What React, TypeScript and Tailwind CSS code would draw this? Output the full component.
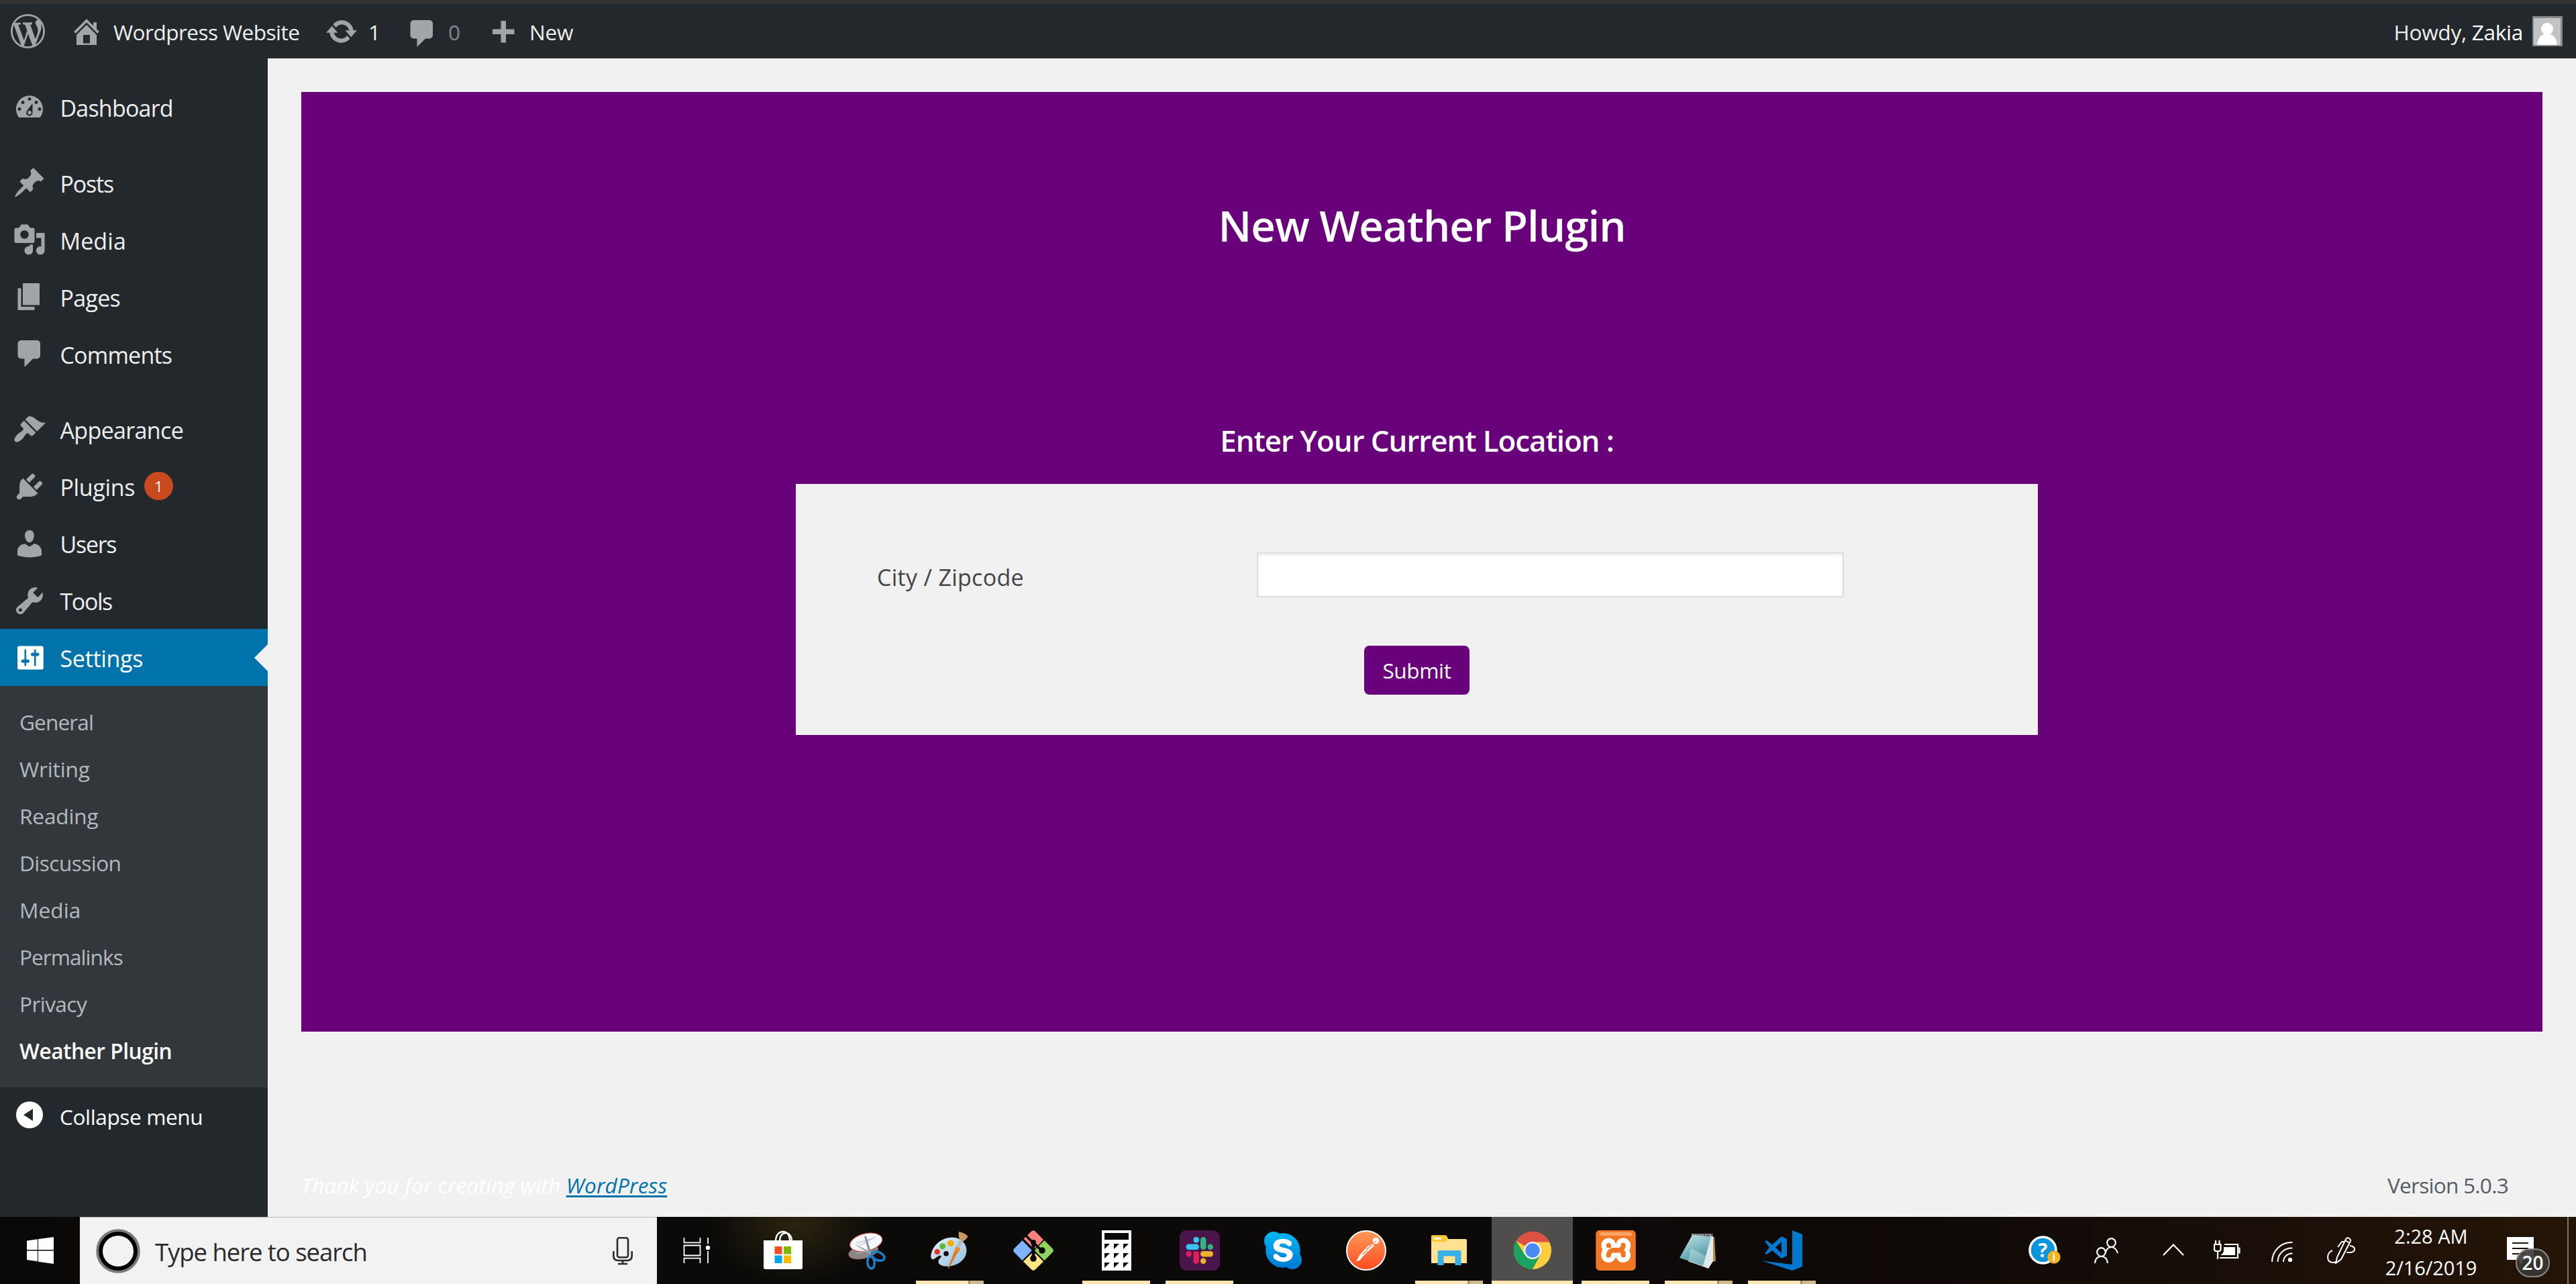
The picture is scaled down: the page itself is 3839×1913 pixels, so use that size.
import React from "react";
import { FaSkype } from "react-icons/fa";
import { SiXampp } from "react-icons/si";

const DASH = {
  wordpress:
    "M20 10c0-5.51-4.49-10-10-10C4.48 0 0 4.49 0 10c0 5.52 4.48 10 10 10 5.51 0 10-4.48 10-10zM7.78 15.37L4.37 6.22c.55-.02 1.17-.08 1.17-.08.5-.06.44-1.13-.06-1.11 0 0-1.45.11-2.37.11-.18 0-.37 0-.58-.01C4.12 2.69 6.87 1.11 10 1.11c2.33 0 4.45.87 6.05 2.34-.68-.11-1.65.39-1.65 1.58 0 .74.45 1.36.9 2.1.35.61.55 1.36.55 2.46 0 1.49-1.4 5-1.4 5l-3.03-8.37c.54-.02.82-.17.82-.17.5-.05.44-1.25-.06-1.22 0 0-1.44.12-2.38.12-.87 0-2.33-.12-2.33-.12-.5-.03-.56 1.2-.06 1.22l.92.08 1.26 3.41zM17.41 10c.24-.64.74-1.87.43-4.25.7 1.29 1.05 2.71 1.05 4.25 0 3.29-1.73 6.24-4.4 7.78.97-2.59 1.94-5.2 2.92-7.78zM6.1 18.09C3.12 16.65 1.11 13.53 1.11 10c0-1.3.23-2.48.72-3.59C3.25 10.3 4.67 14.2 6.1 18.09zm4.03-6.63l2.58 6.98c-.86.29-1.76.45-2.71.45-.79 0-1.57-.11-2.29-.33.81-2.38 1.62-4.74 2.42-7.1z",
  home: "M16 8.5l1.53 1.53-1.06 1.06L10 4.6l-6.47 6.49-1.06-1.06L10 2.5l4 4v-2h2v4zm-6-2.46l6 5.99V18H4v-5.97zM12 17v-5H8v5h4z",
  update:
    "M10.2 3.28c3.53 0 6.43 2.61 6.92 6h2.08l-3.5 4-3.5-4h2.32c-.45-1.97-2.21-3.45-4.32-3.45-1.45 0-2.73.71-3.54 1.78L4.95 5.66C6.23 4.2 8.11 3.28 10.2 3.28zm-.4 13.44c-3.52 0-6.43-2.61-6.92-6H.8l3.5-4c1.17 1.33 2.33 2.67 3.5 4H5.48c.45 1.97 2.21 3.45 4.32 3.45 1.45 0 2.73-.71 3.54-1.78l1.71 1.95c-1.28 1.46-3.15 2.38-5.25 2.38z",
  comment:
    "M5 2h9.4q.82 0 1.41.59T16.4 4v7q0 .82-.59 1.41T14.4 13h-2.4l-5 5v-5H5q-.82 0-1.41-.59T3 11V4q0-.82.59-1.41T5 2z",
  plus: "M17 7v3h-5v5H9v-5H4V7h5V2h3v5h5z",
  dashboard:
    "M3.76 16h12.48c1.1-1.37 1.76-3.11 1.76-5 0-4.42-3.58-8-8-8s-8 3.58-8 8c0 1.89.66 3.63 1.76 5zM10 4c.55 0 1 .45 1 1s-.45 1-1 1-1-.45-1-1 .45-1 1-1zM6 6c.55 0 1 .45 1 1s-.45 1-1 1-1-.45-1-1 .45-1 1-1zm8 0c.55 0 1 .45 1 1s-.45 1-1 1-1-.45-1-1 .45-1 1-1zm-2.2 1.5v5.3a1.9 1.9 0 1 1-3.5-.6zM4 10c.55 0 1 .45 1 1s-.45 1-1 1-1-.45-1-1 .45-1 1-1zm12 0c.55 0 1 .45 1 1s-.45 1-1 1-1-.45-1-1 .45-1 1-1zm-6 2a1.1 1.1 0 1 0 0 2.2A1.1 1.1 0 1 0 10 12z",
  posts:
    "M10.44 3.02l1.82-1.82 6.36 6.35-1.83 1.82c-1.05-.68-2.48-.57-3.41.36l-.75.75c-.92.93-1.04 2.35-.35 3.41l-1.83 1.82-2.41-2.41-2.8 2.79c-.42.42-3.38 2.71-3.8 2.29s1.86-3.39 2.28-3.81l2.79-2.79L4.1 9.37l1.83-1.83c1.05.69 2.48.57 3.4-.36l.75-.74c.93-.93 1.05-2.36.36-3.42z",
  media:
    "M13 11V4c0-.55-.45-1-1-1h-1.67L9 1H5L3.67 3H2c-.55 0-1 .45-1 1v7c0 .55.45 1 1 1h10c.55 0 1-.45 1-1zM7 4.5c1.38 0 2.5 1.12 2.5 2.5S8.38 9.5 7 9.5 4.5 8.38 4.5 7 5.62 4.5 7 4.5zM14 6h5v10.5c0 1.38-1.12 2.5-2.5 2.5S14 17.88 14 16.5s1.12-2.5 2.5-2.5c.17 0 .34.02.5.05V9h-3V6zm-4 8.05V13h2v3.5c0 1.38-1.12 2.5-2.5 2.5S7 17.88 7 16.5 8.12 14 9.5 14c.17 0 .34.02.5.05z",
  pages: "M6 15V2h10v13H6zm-1 1h8v2H3V5h2v11z",
  appearance:
    "M14.48 11.06L7.41 3.99l1.5-1.5c.5-.56 2.3-.47 3.51.32 1.21.8 1.43 1.28 2.91 2.1 1.18.64 2.45 1.26 4.45.85zm-.71.71L6.7 4.7 4.93 6.47c-.39.39-.39 1.02 0 1.41l1.06 1.06c.39.39.39 1.03 0 1.42-.6.6-1.43 1.11-2.21 1.69-.35.26-.7.53-1.01.84C1.43 14.23.4 16.08 1.4 17.07c.99 1 2.84-.03 4.18-1.36.31-.31.58-.66.85-1.02.57-.78 1.08-1.61 1.69-2.21.39-.39 1.02-.39 1.41 0l1.06 1.06c.39.39 1.02.39 1.41 0z",
  plugins:
    "M13.11 4.36L9.87 7.6 8 5.73l3.24-3.24c.35-.34 1.05-.2 1.56.32.52.51.66 1.21.31 1.55zm-8 1.77l.91-1.12 9.01 9.01-1.19.84c-.71.71-2.63 1.16-3.82 1.16H6.14L4.9 17.26c-.59.59-1.54.59-2.12 0-.59-.58-.59-1.53 0-2.12l1.24-1.24v-3.88c0-1.13.4-3.19 1.09-3.89zm7.26 3.97l3.24-3.24c.34-.35 1.04-.21 1.55.31.52.51.66 1.21.31 1.55l-3.24 3.25z",
  users:
    "M10 9.25c-2.27 0-2.73-3.44-2.73-3.44C7 4.02 7.82 2 9.97 2c2.16 0 2.98 2.02 2.71 3.81 0 0-.41 3.44-2.68 3.44zm0 2.57L12.72 10c2.39 0 4.52 2.33 4.52 4.53v2.49s-3.65 1.13-7.24 1.13c-3.65 0-7.24-1.13-7.24-1.13v-2.49c0-2.25 1.94-4.48 4.47-4.48z",
  tools:
    "M16.68 9.77c-1.34 1.34-3.3 1.67-4.95.99l-5.41 6.52c-.99.99-2.59.99-3.58 0s-.99-2.59 0-3.57l6.52-5.42c-.68-1.65-.35-3.61.99-4.95 1.28-1.28 3.12-1.62 4.72-1.06l-2.89 2.89 2.82 2.82 2.86-2.87c.53 1.58.18 3.39-1.08 4.65zM3.81 16.21c.4.39 1.04.39 1.43 0 .4-.4.4-1.04 0-1.43-.39-.4-1.03-.4-1.43 0-.39.39-.39 1.03 0 1.43z",
  settings:
    "M18.3 16V4c0-.55-.45-1-1-1H3.8c-.55 0-1 .45-1 1v12c0 .55.45 1 1 1h13.5c.55 0 1-.45 1-1zM8 11h1c.55 0 1 .45 1 1s-.45 1-1 1H8v1.5c0 .28-.22.5-.5.5s-.5-.22-.5-.5V13H6c-.55 0-1-.45-1-1s.45-1 1-1h1V5.500c0-.28.22-.5.5-.5s.5.22.5.5V11zm5.400 6-0-0zM14.800 9h-1v5.500c0 .28-.22.5-.5.5s-.5-.22-.5-.5V9h-1c-.55 0-1-.45-1-1s.45-1 1-1h1V5.500c0-.28.22-.5.5-.5s.5.22.5.5V7h1c.55 0 1 .45 1 1s-.45 1-1 1z",
};

function Dash({ name, className }: { name: keyof typeof DASH; className: string }) {
  return (
    <svg viewBox="0 0 20 20" className={className} fill="currentColor" fillRule="evenodd">
      <path d={DASH[name]} />
    </svg>
  );
}

function AdminBar() {
  return (
    <header className="h-[87px] border-t-[6px] border-[#333333] bg-[#23282d] flex items-center text-[31.6px] leading-none text-[#eeeeee]">
      <Dash name="wordpress" className="ml-[16px] w-[51px] h-[51px] text-[#a0a5aa]" />
      <Dash name="home" className="ml-[37px] w-[50px] h-[50px] text-[#a0a5aa]" />
      <span className="ml-[15px] pt-[3px] w-[277px] tracking-[-0.57px] whitespace-nowrap">Wordpress Website</span>
      <Dash name="update" className="ml-[38px] w-[50px] h-[50px] text-[#a0a5aa]" />
      <span className="ml-[15px] pt-[3px] w-[20px]">1</span>
      <Dash name="comment" className="ml-[35px] mt-[6px] w-[50px] h-[50px] text-[#a0a5aa]" />
      <span className="ml-[14px] pt-[3px] w-[20px] text-[#82878c]">0</span>
      <Dash name="plus" className="ml-[36px] mt-[8px] w-[50px] h-[50px] text-[#a0a5aa]" />
      <span className="ml-[15px] pt-[3px] tracking-[-0.25px]">New</span>
      <div className="ml-auto mr-[20px] flex items-center">
        <span className="pt-[3px] tracking-[-0.3px] whitespace-nowrap">
          Howdy, <span className="text-white">Zakia</span>
        </span>
        <span className="ml-[14px] w-[45px] h-[45px] border-2 border-t-[3px] border-r-[3px] border-[#82878c] bg-[#c3c3c3]">
          <svg viewBox="0 0 40 40" className="w-full h-full" fill="#fff">
            <circle cx="20" cy="16" r="9" />
            <path d="M5 40c1-10 6-17 15-17s14 7 15 17z" />
          </svg>
        </span>
      </div>
    </header>
  );
}

type MenuItem = { icon: keyof typeof DASH; label: string; track: string; gap?: boolean; badge?: string; current?: boolean };

const MENU: MenuItem[] = [
  { icon: "dashboard", label: "Dashboard", track: "tracking-[-0.8px]" },
  { icon: "posts", label: "Posts", track: "tracking-[-1.2px]", gap: true },
  { icon: "media", label: "Media", track: "tracking-[0.1px]" },
  { icon: "pages", label: "Pages", track: "tracking-[-0.7px]" },
  { icon: "comment", label: "Comments", track: "tracking-[-0.8px]" },
  { icon: "appearance", label: "Appearance", track: "tracking-[-0.65px]", gap: true },
  { icon: "plugins", label: "Plugins", track: "tracking-[-0.35px]", badge: "1" },
  { icon: "users", label: "Users", track: "tracking-[-1.3px]" },
  { icon: "tools", label: "Tools", track: "tracking-[-1.4px]" },
  { icon: "settings", label: "Settings", track: "tracking-[-0.3px]", current: true },
];

const SUBMENU = [
  ["General", "tracking-[-0.9px]"],
  ["Writing", "tracking-[-0.15px]"],
  ["Reading", "tracking-[-0.18px]"],
  ["Discussion", "tracking-[-0.55px]"],
  ["Media", "tracking-[0.1px]"],
  ["Permalinks", "tracking-[-0.97px]"],
  ["Privacy", "tracking-[-0.58px]"],
];

function Sidebar() {
  return (
    <nav className="w-[399px] shrink-0 bg-[#23282d] pt-[30px] text-[34px] leading-none text-[#eeeeee]">
      {MENU.map((m) => (
        <div
          key={m.label}
          className={`relative flex h-[85px] items-center ${m.gap ? "mt-[27.5px]" : ""} ${m.current ? "bg-[#0073aa] text-white" : ""}`}
        >
          <Dash name={m.icon} className={`ml-[18.5px] w-[50px] h-[50px] ${m.current ? "text-white" : "text-[#a0a5aa]"}`} />
          <span className={`ml-[21px] pt-[3px] ${m.track}`}>{m.label}</span>
          {m.badge && (
            <span className="ml-[14px] -mt-[1px] w-[43px] h-[42px] rounded-full bg-[#ca4a1f] text-white text-[22px] flex items-center justify-center">
              {m.badge}
            </span>
          )}
          {m.current && (
            <span className="absolute right-0 top-[23px] w-0 h-0 border-y-[20px] border-y-transparent border-r-[20px] border-r-[#f1f1f1]" />
          )}
        </div>
      ))}
      <div className="bg-[#32373c] pt-[17.5px] pb-[20px] text-[31.6px] text-[#b4b9be]">
        {SUBMENU.map(([label, track]) => (
          <div key={label} className={`h-[70px] pl-[29px] pt-[3px] flex items-center ${track}`}>
            {label}
          </div>
        ))}
        <div className="h-[70px] pl-[29px] pt-[3px] flex items-center font-semibold text-white tracking-[-0.47px]">Weather Plugin</div>
      </div>
      <div className="h-[85px] flex items-center text-[31.6px] text-white">
        <svg viewBox="0 0 40 40" className="ml-[24px] w-[40px] h-[40px] -mt-[3px]">
          <circle cx="20" cy="20" r="20" fill="#fff" />
          <path d="M11 20 25 11v18z" fill="#23282d" />
        </svg>
        <span className="ml-[25px] pt-[3px] tracking-[-0.4px]">Collapse menu</span>
      </div>
    </nav>
  );
}

function WeatherPanel() {
  return (
    <section className="w-[3340px] h-[1400px] bg-[#69017b] text-white">
      <h1 className="pt-[164px] text-center text-[63.5px] leading-[70px] font-semibold tracking-[-0.96px]">New Weather Plugin</h1>
      <div className="ml-[737px] w-[1851px]">
        <h2 className="pt-[260px] text-center text-[43.9px] leading-[50px] font-semibold tracking-[-1.07px]">Enter Your Current Location :</h2>
        <form className="mt-[40px] h-[374px] bg-[#f1f1f1] pt-[102px]">
          <div className="flex items-center">
            <label className="w-[687px] pl-[121px] pt-[6px] text-[34px] leading-none tracking-[0.3px] text-[#444444]">City / Zipcode</label>
            <input className="w-[875px] h-[67px] border-[2.5px] border-[#dddddd] bg-white shadow-[inset_0_2.5px_5px_rgba(0,0,0,0.07)]" />
          </div>
          <button
            type="button"
            className="mt-[72px] ml-[847px] block w-[157px] h-[73px] rounded-[8px] bg-[#69017b] pt-[1px] text-[31.6px] leading-none tracking-[-0.4px] text-white"
          >
            Submit
          </button>
        </form>
      </div>
    </section>
  );
}

const StoreIcon = () => (
  <>
    <path d="M18 16C18 6 24 2 29 2s10 4 10 14M24 16C24 8 28 4 33 4s9 5 9 12" fill="none" stroke="#fff" strokeWidth="2.4" />
    <path d="M0 15h58v40q0 3-3 3H3q-3 0-3-3z" fill="#fff" />
    <path d="M16.5 24h11v11.5h-11z" fill="#f25022" />
    <path d="M30 24h11v11.5H30z" fill="#7fba00" />
    <path d="M16.5 37.5h11v11.5h-11z" fill="#00a4ef" />
    <path d="M30 37.5h11v11.5H30z" fill="#ffb900" />
  </>
);

const SnipIcon = () => (
  <>
    <ellipse cx="24.7" cy="32" rx="22.5" ry="10" transform="rotate(-13 24.7 32)" fill="#8a8685" stroke="#b04a4a" strokeWidth=".7" />
    <ellipse cx="28.7" cy="17.7" rx="24.5" ry="12.8" transform="rotate(-13 28.7 17.7)" fill="#f6f7fa" stroke="#d84b4b" strokeWidth="1" />
    <path d="M14 19l22-6M17 24l25-14M14 35l14-4" stroke="#b9bbc0" strokeWidth="1.2" />
    <path d="M10.5 20.5 37 32l-2 4z" fill="#a9adb5" />
    <path d="M26 8.5l3 .5 7.500 25-4-1z" fill="#8d9199" />
    <ellipse cx="46.500" cy="38.500" rx="10" ry="6" transform="rotate(22 46.500 38.500)" fill="none" stroke="#1780cc" strokeWidth="3.4" />
    <ellipse cx="36" cy="48" rx="5.200" ry="9" transform="rotate(-6 36 48)" fill="none" stroke="#1780cc" strokeWidth="3.4" />
  </>
);

const PaintIcon = () => (
  <>
    <defs>
      <linearGradient id="pal" x1="0" y1="0" x2="1" y2="1">
        <stop offset="0" stopColor="#e9f3fa" />
        <stop offset="1" stopColor="#8dbfe0" />
      </linearGradient>
    </defs>
    <path d="M33 11c12 0 21 8 21 19 0 13-12 22-26 23-9 1-16-2-15-7 0-4 5-5 4-8-2-3-7 2-12 5C1 43 1 38 3 32c4-12 16-21 30-21z" fill="url(#pal)" stroke="#cfe2ee" strokeWidth=".8" />
    <circle cx="24" cy="34.700" r="3.800" fill="#0a0a0a" />
    <circle cx="10.700" cy="32" r="4.300" fill="#e2382c" />
    <circle cx="18.700" cy="23.700" r="4.500" fill="#5cb83a" />
    <circle cx="30.700" cy="19.300" r="4.800" fill="#f7a90c" />
    <path d="M26.500 57 38 27l5 2.500L28.500 56z" fill="#dd7a1e" />
    <path d="M37 28.500 44 13l5.500 3L42.500 30z" fill="#b5bcc4" />
    <path d="M38 24.500 36.500 30l6 3 3-6z" fill="#e88c30" />
    <path d="M43 2c5 1 10 3 13.500 7-2 4-5 6-7.500 7.500L44 13.500C42.500 10 42.500 6 43 2z" fill="#c69a66" />
  </>
);

const GitIcon = () => (
  <>
    <path d="M27.500 1.200q2.500-2 5 0L45 14 31.500 28.500 15.500 12.500z" fill="#ff8080" />
    <path d="M58.800 27.500q2 2.500 0 5L46.500 45 31.500 30 46.500 15z" fill="#8fd45f" />
    <path d="M32.500 58.800q-2.500 2-5 0L15 46.500 30 31.500 45 46.500z" fill="#ffe680" />
    <path d="M1.200 32.500q-2-2.500 0-5L13.500 15 28 30 13.500 45z" fill="#80b3ff" />
    <path d="M19 8 30 19v23M30 18 42 30" fill="none" stroke="#0a0a0a" strokeWidth="3.600" />
    <circle cx="30" cy="18" r="4" fill="#0a0a0a" />
    <circle cx="30" cy="42" r="4.800" fill="#0a0a0a" />
    <circle cx="43" cy="30" r="4.800" fill="#0a0a0a" />
    <path d="M30 20v22" stroke="#0a0a0a" strokeWidth="5" />
  </>
);

const CalcIcon = () => (
  <>
    <path d="M8 0h44v60H8z" fill="#fff" />
    <path d="M12 4h36v10H12z" fill="#0a0a0a" />
    {[20, 34, 48].map((y) =>
      [12, 26, 40].map((x) => <path key={`${x}-${y}`} d={`M${x} ${y}h8l-8 8z`} fill="#0a0a0a" />),
    )}
  </>
);

const SlackIcon = () => (
  <>
    <rect width="60" height="60" rx="10" fill="#4a154b" />
    <rect x="20.500" y="10" width="8.500" height="8.500" rx="4" fill="#36c5f0" />
    <rect x="9.500" y="20.500" width="19.500" height="8.500" rx="4.200" fill="#36c5f0" />
    <rect x="31" y="10" width="8.500" height="19" rx="4.200" fill="#2eb67d" />
    <rect x="41.500" y="20.500" width="8.500" height="8.500" rx="4.200" fill="#2eb67d" />
    <rect x="9.500" y="31" width="8.500" height="8.500" rx="4.200" fill="#e01e5a" />
    <rect x="20.500" y="31" width="8.500" height="19" rx="4.200" fill="#e01e5a" />
    <rect x="31" y="31" width="19" height="8.500" rx="4.200" fill="#ecb22e" />
    <rect x="31" y="41.500" width="8.500" height="8.500" rx="4.200" fill="#ecb22e" />
  </>
);

const SkypeIcon = () => (
  <>
    <defs>
      <linearGradient id="sky" x1="0" y1="0" x2="0" y2="1">
        <stop offset="0" stopColor="#00b8f4" />
        <stop offset="1" stopColor="#0078d4" />
      </linearGradient>
    </defs>
    <circle cx="30" cy="30" r="20" fill="#fff" />
    <FaSkype x="-2" y="-2" size="64" fill="url(#sky)" />
  </>
);

const PostmanIcon = () => (
  <>
    <defs>
      <linearGradient id="pm" x1="0" y1="0" x2="0" y2="1">
        <stop offset="0" stopColor="#ff9a56" />
        <stop offset="1" stopColor="#ff4b22" />
      </linearGradient>
    </defs>
    <circle cx="30" cy="30" r="29" fill="url(#pm)" stroke="#fff" strokeWidth="2" />
    <circle cx="44.500" cy="15.500" r="4.800" fill="#fff" />
    <path d="M40 20 32 24 21 36l-6 10 5-1 8-9 14-13z" fill="#fff" />
    <path d="M41 18l4-2M30 29l9-7M24 36l8-6" stroke="#ff7440" strokeWidth="1.200" />
  </>
);

const ExplorerIcon = () => (
  <>
    <path d="M3 9q0-1.500 1.500-1.500H24q2 0 2.500 2l1.500 3.500H54q2 0 2 2V49H4q-1 0-1-1z" fill="#fee292" />
    <path d="M3 9q0-1.500 1.500-1.500H24q2 0 2.500 2L28 13q-2 4-4 4H3z" fill="#fccb34" />
    <path d="M7 11h11v2.500H7z" fill="#fff" />
    <path d="M12.500 52V32q0-2 2-2h31q2 0 2 2v20h-9V38.500h-17V52z" fill="#38b1e8" />
  </>
);

const ChromeIcon = () => (
  <>
    <circle cx="30" cy="30" r="28" fill="#ffcd40" />
    <path d="M30 30 5.750 16a28 28 0 0 1 49.500 1.500H30z" fill="#dd5144" />
    <path d="M5.750 16A28 28 0 0 0 30 58L41.300 37 30 30 18.700 37z" fill="#1ba261" />
    <circle cx="30" cy="30" r="13" fill="#f4f4f4" />
    <circle cx="30" cy="30" r="10.700" fill="#4a8af4" />
  </>
);

const XamppIcon = () => (
  <>
    <rect x="5" y="8" width="50" height="44" fill="#fff" />
    <SiXampp x="0" y="0" size="60" fill="#f37623" />
    <rect x="6" y="3" width="48" height="5" rx="2.500" fill="#fba566" />
  </>
);

const NotepadIcon = () => (
  <>
    <defs>
      <linearGradient id="np" x1="0" y1="0" x2="0.400" y2="1">
        <stop offset="0" stopColor="#c9e6ea" />
        <stop offset="1" stopColor="#3d909e" />
      </linearGradient>
    </defs>
    <path d="M48 9 53 10 55 46 50 47z" fill="#b08c4a" />
    <path d="M46 8 51 9 51 46 44 57 40 50z" fill="#e6ebec" />
    <path d="M22 8 50 10 44 57 14 46z" fill="#dfe9eb" />
    <path d="M20 7 48 9 36 53 1 41z" fill="url(#np)" />
    <path d="M18 27 14 47 36 53 40 38z" fill="#fff" opacity=".3" />
    <path d="M19 6.500h31" stroke="#c9cdd0" strokeWidth="3" strokeDasharray="1.500 1" />
  </>
);

const VsCodeIcon = () => (
  <>
    <path d="M45 0 60 6v48l-15 6L0 45.500 45 51z" fill="#0078d0" />
    <path d="M29 9 37 13v25l-8 4L15 30 7 36l-3-1.500 7-9-7-9L7 15l8 6.500z" fill="#0078d0" />
    <path d="M29 17v17L20 25.500z" fill="#0c0908" />
  </>
);

type App = { name: string; icon: () => React.JSX.Element; run?: "one" | "many"; active?: boolean };

const APPS: App[] = [
  { name: "Store", icon: StoreIcon },
  { name: "Snipping Tool", icon: SnipIcon },
  { name: "Paint", icon: PaintIcon, run: "many" },
  { name: "Git", icon: GitIcon },
  { name: "Calculator", icon: CalcIcon, run: "one" },
  { name: "Slack", icon: SlackIcon, run: "one" },
  { name: "Skype", icon: SkypeIcon },
  { name: "Postman", icon: PostmanIcon },
  { name: "Explorer", icon: ExplorerIcon, run: "many" },
  { name: "Chrome", icon: ChromeIcon, active: true },
  { name: "XAMPP", icon: XamppIcon, run: "one" },
  { name: "Notepad", icon: NotepadIcon, run: "many" },
  { name: "VS Code", icon: VsCodeIcon, run: "many" },
];

function Taskbar() {
  return (
    <footer className="h-[100px] flex bg-[radial-gradient(ellipse_130px_90px_at_1185px_10px,#2a230f,transparent),linear-gradient(90deg,#0a0908_0%,#0b0a09_55%,#0f0a08_75%,#1a0f08_88%,#251507_100%)] text-white">
      <div className="w-[119px] flex items-center justify-center">
        <svg viewBox="0 0 40 40" className="w-[40px] h-[40px]" fill="#fff">
          <path d="M0 5.500 16 3.200V19H0zM17 3 40 0v19H17zM0 20.500h16v15.800L0 34zM17 20.500h23V40l-23-3.300z" />
        </svg>
      </div>
      <div className="w-[860px] bg-[#f2f2f2] border-t border-[#b9b9b9] flex items-center">
        <svg viewBox="0 0 66 66" className="ml-[24px] w-[66px] h-[66px]">
          <circle cx="33" cy="33" r="30.800" fill="none" stroke="#7a7a7a" strokeWidth="4" />
          <circle cx="33" cy="33" r="26" fill="#f2f2f2" stroke="#000" strokeWidth="6" />
        </svg>
        <span className="ml-[22px] pt-[3px] text-[36.5px] leading-none tracking-[-1.06px] text-[#2b2b2b]">Type here to search</span>
        <svg viewBox="0 0 30 42" className="ml-auto mr-[36px] w-[30px] h-[42px]" fill="none" stroke="#2b2b2b" strokeWidth="2.600">
          <rect x="7" y="1.300" width="16" height="29" rx="3" />
          <path d="M1.300 21v7q0 7 7 7h13.400q7 0 7-7v-7M15 35v5M8 40h14" />
        </svg>
      </div>
      <div className="w-[128px] flex items-center pl-[39px]">
        <svg viewBox="0 0 42 40" className="w-[42px] h-[40px]" fill="none" stroke="#fff" strokeWidth="1.800">
          <path d="M1.500 1v7.300h24V1M1.500 39v-7.300h24V39M1.500 12.500h24v15h-24zM37 1v9M37 21v18" />
          <circle cx="37" cy="16" r="3.200" fill="#fff" stroke="none" />
        </svg>
      </div>
      {APPS.map(({ name, icon: Icon, run, active }) => (
        <div key={name} className={`relative w-[121px] mr-[3px] flex items-center justify-center ${active ? "bg-[#504e4d]" : ""}`}>
          <svg viewBox="0 0 60 60" className="w-[60px] h-[60px]">
            <Icon />
          </svg>
          {active && <span className="absolute inset-x-0 bottom-0 h-[5px] bg-[#ffe7b0]" />}
          {run === "one" && <span className="absolute inset-x-[10px] bottom-0 h-[5px] bg-[#ffe7b0]" />}
          {run === "many" && (
            <span className="absolute inset-x-[10px] bottom-0 h-[5px] flex">
              <span className="flex-1 bg-[#ffe7b0]" />
              <span className="w-[3px] bg-[#9c8d6b]" />
              <span className="w-[20px] bg-[#cdba8d]" />
            </span>
          )}
        </div>
      ))}
      <div className="ml-auto flex items-center">
        <svg viewBox="0 0 48 44" className="w-[48px] h-[44px] overflow-visible">
          <circle cx="21.500" cy="21.500" r="19.500" fill="#0b95dd" stroke="#fff" strokeWidth="3.500" />
          <text x="21.500" y="32" textAnchor="middle" fontSize="29" fontWeight="700" fill="#fff">?</text>
          <circle cx="38" cy="32" r="9.700" fill="#f5b21e" />
          <text x="38" y="38" textAnchor="middle" fontSize="16" fontWeight="700" fill="#fff">i</text>
        </svg>
        <svg viewBox="0 0 36 38" className="ml-[50px] w-[36px] h-[38px]" fill="none" stroke="#fff" strokeWidth="2.200">
          <circle cx="25.500" cy="7.500" r="6.300" />
          <path d="M17 22q2-8 8.500-8T35 23" />
          <circle cx="10.500" cy="21.500" r="6.300" />
          <path d="M1 38q1-10 9.500-10T20 38" />
        </svg>
        <svg viewBox="0 0 32 18" className="ml-[66px] -mt-[3px] w-[32px] h-[18px]" fill="none" stroke="#fff" strokeWidth="2.200">
          <path d="M1 17 16 1.500 31 17" />
        </svg>
        <svg viewBox="0 0 40 28" className="ml-[44px] -mt-[3px] w-[40px] h-[28px]" fill="none" stroke="#fff" strokeWidth="2.200">
          <path d="M16 6h20v20H9M38.500 10.500v9" />
          <path d="M15 10h17v12H10q5-3 5-7z" fill="#fff" stroke="none" />
          <path d="M3 0v6M8.500 0v6M1 6h9.500v7q0 3-3 3H4q-3 0-3-3zM6 16v12" />
        </svg>
        <svg viewBox="0 0 32 30" className="ml-[46px] mt-[4px] w-[32px] h-[30px]" fill="none" stroke="#fff" strokeWidth="2">
          <path d="M1 30A29 29 0 0 1 31.500 1M9.500 30A20.500 20.500 0 0 1 31.500 9.500M18 30A12.500 12.500 0 0 1 31.500 17.500" />
          <circle cx="28" cy="27" r="3.200" fill="#fff" stroke="none" />
        </svg>
        <svg viewBox="0 0 42 40" className="ml-[51px] w-[42px] h-[40px]" fill="none" stroke="#fff" strokeWidth="2">
          <path d="M13 39 15 30 28 3q2-3 5-1t1.500 5L21 33zM27 5l7 4M16 15 22 7l4 0M8 20q-7 3-7 10 0 8 8 8 3 0 4-1M34 13q7 1 7 5 0 5-8 5h-4" />
        </svg>
        <div className="ml-[35px] w-[156px] pt-[3px] text-center text-[29px] leading-[47px] whitespace-nowrap">
          <div>2:28 AM</div>
          <div className="tracking-[-0.1px]">2/16/2019</div>
        </div>
        <div className="relative ml-[35px] mt-[20px] w-[66px] h-[61px]">
          <svg viewBox="0 0 40 44" className="w-[40px] h-[44px]">
            <path d="M0 0h40v34H26l-7 8v-8H0z" fill="#fff" />
            <path d="M8 9h24M8 17h24M8 25h18" stroke="#1d1108" strokeWidth="2.200" />
          </svg>
          <span className="absolute left-[13px] top-[17px] w-[51px] h-[43px] rounded-full border-2 border-[#8b8885] bg-[#3a3735]/90 text-[28px] font-semibold leading-none flex items-center justify-center">
            20
          </span>
        </div>
        <span className="ml-[24px] mr-[11px] w-[2px] h-[100px] bg-[#7b746c]" />
      </div>
    </footer>
  );
}

export default function App() {
  return (
    <div className="w-[3839px] h-[1913px] overflow-hidden flex flex-col bg-[#f1f1f1] font-['Open_Sans','Noto_Sans',sans-serif]">
      <AdminBar />
      <div className="h-[1726px] flex">
        <Sidebar />
        <main className="pt-[50px] pl-[50px] w-[3440px] flex flex-col">
          <WeatherPanel />
          <div className="mt-auto mb-[30px] pr-[101px] flex justify-between text-[31.6px] leading-[34px]">
            <p className="italic tracking-[0.18px] text-white">
              Thank you for creating with{" "}
              <a className="text-[#0073aa] underline decoration-[2.500px] underline-offset-[3px]">WordPress</a>.
            </p>
            <p className="tracking-[-0.76px] text-[#555d66]">Version 5.0.3</p>
          </div>
        </main>
      </div>
      <Taskbar />
    </div>
  );
}
